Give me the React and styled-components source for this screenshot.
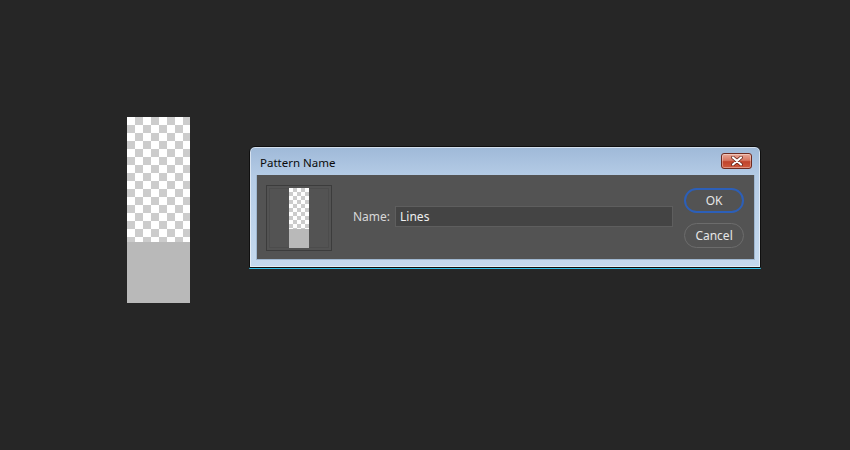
import React from 'react'
import styled, {createGlobalStyle} from 'styled-components'

const GlobalStyle = createGlobalStyle`
  html, body {
    margin: 0;
    padding: 0;
    background: #262626;
  }
`

const Page = styled.main`
  width: 850px;
  height: 450px;
  box-sizing: border-box;
  display: flex;
  align-items: flex-start;
  padding: 117px 0 0 127px;
  background: #262626;
  font-family: 'Noto Sans', 'Open Sans', sans-serif;
`

const Swatch = styled.div`
  width: ${p => p.w}px;
  height: ${p => p.h}px;
  display: flex;
  flex-direction: column;
  flex-shrink: 0;
`

const Checker = styled.div`
  height: ${p => p.h}px;
  background: repeating-conic-gradient(#cccccc 0 25%, #ffffff 0 50%) 0 0 /
    ${p => p.cell * 2}px ${p => p.cell * 2}px;
`

const Fill = styled.div`
  flex: 1;
  background: #b9b9b9;
`

const Dialog = styled.section`
  margin: 29px 0 0 59px;
  width: 512px;
  height: 122px;
  box-sizing: border-box;
  display: flex;
  flex-direction: column;
  border: 1px solid #0f0f0f;
  border-radius: 6px 6px 1px 1px;
  background: linear-gradient(#9fb9d8 0%, #b5cce6 25%, #c4d9ee 100%);
  box-shadow: inset 0 0 0 1px rgba(255, 255, 255, 0.55), 0 1px 0 #33bfe8;
`

const TitleBar = styled.header`
  height: 28px;
  display: flex;
  align-items: center;
  justify-content: space-between;
  padding: 0 8px 0 10px;
`

const Title = styled.h1`
  margin: 2px 0 0;
  font-size: 11.5px;
  font-weight: 400;
  color: #0b0b0b;
`

const Close = styled.button`
  width: 31px;
  height: 16px;
  padding: 0;
  display: flex;
  align-items: center;
  justify-content: center;
  border: 1px solid #6e2a20;
  border-radius: 3px;
  background: linear-gradient(#e8a898 0%, #d77863 45%, #c0432c 55%, #cf5a3e 100%);
  box-shadow: inset 0 0 0 1px rgba(255, 255, 255, 0.35);
`

const Body = styled.div`
  height: 85px;
  margin: 0 5px 0 6px;
  display: flex;
  align-items: flex-start;
  background: #535353;
  border: 1px solid #9fb7d0;
  border-top: none;
  box-sizing: border-box;
`

const Preview = styled.div`
  margin: 10px 0 0 9px;
  width: 66px;
  height: 66px;
  box-sizing: border-box;
  display: flex;
  justify-content: center;
  align-items: center;
  border: 1px solid #3c3c3c;
  box-shadow: inset 0 0 0 2px #535353, inset 0 0 0 3px #4c4c4c;
  flex-shrink: 0;
`

const Field = styled.label`
  margin: 31px 0 0 21px;
  display: flex;
  align-items: center;
  gap: 5px;
  font-size: 12px;
  color: #d8d8d8;
`

const Input = styled.input`
  width: 278px;
  height: 21px;
  box-sizing: border-box;
  padding: 0 4px;
  border: 1px solid #5e5e5e;
  background: #444444;
  color: #efefef;
  font-family: inherit;
  font-size: 12px;
  outline: none;
`

const Buttons = styled.div`
  margin: 13px 0 0 11px;
  display: flex;
  flex-direction: column;
  gap: 10px;
`

const Button = styled.button`
  width: 60px;
  height: 25px;
  box-sizing: border-box;
  border-radius: 13px;
  border: ${p => (p.primary ? '2px solid #2c5fb8' : '1px solid #6c6c6c')};
  background: #535353;
  color: #e6e6e6;
  font-family: inherit;
  font-size: 12px;
  padding: 0;
`

const App = () => (
  <Page>
    <GlobalStyle />
    <Swatch w={63} h={186}>
      <Checker h={125} cell={8} />
      <Fill />
    </Swatch>
    <Dialog>
      <TitleBar>
        <Title>Pattern Name</Title>
        <Close aria-label="Close">
          <svg width="14" height="10" viewBox="0 0 14 10">
            <path
              d="M3 1.5 L11 8.5 M11 1.5 L3 8.5"
              stroke="#5a1c12"
              strokeWidth="3.6"
              strokeLinecap="round"
            />
            <path
              d="M3 1.5 L11 8.5 M11 1.5 L3 8.5"
              stroke="#ffffff"
              strokeWidth="2.2"
              strokeLinecap="round"
            />
          </svg>
        </Close>
      </TitleBar>
      <Body>
        <Preview>
          <Swatch w={20} h={60}>
            <Checker h={41} cell={4} />
            <Fill />
          </Swatch>
        </Preview>
        <Field>
          Name:
          <Input defaultValue="Lines" />
        </Field>
        <Buttons>
          <Button primary>OK</Button>
          <Button>Cancel</Button>
        </Buttons>
      </Body>
    </Dialog>
  </Page>
)

export default App
